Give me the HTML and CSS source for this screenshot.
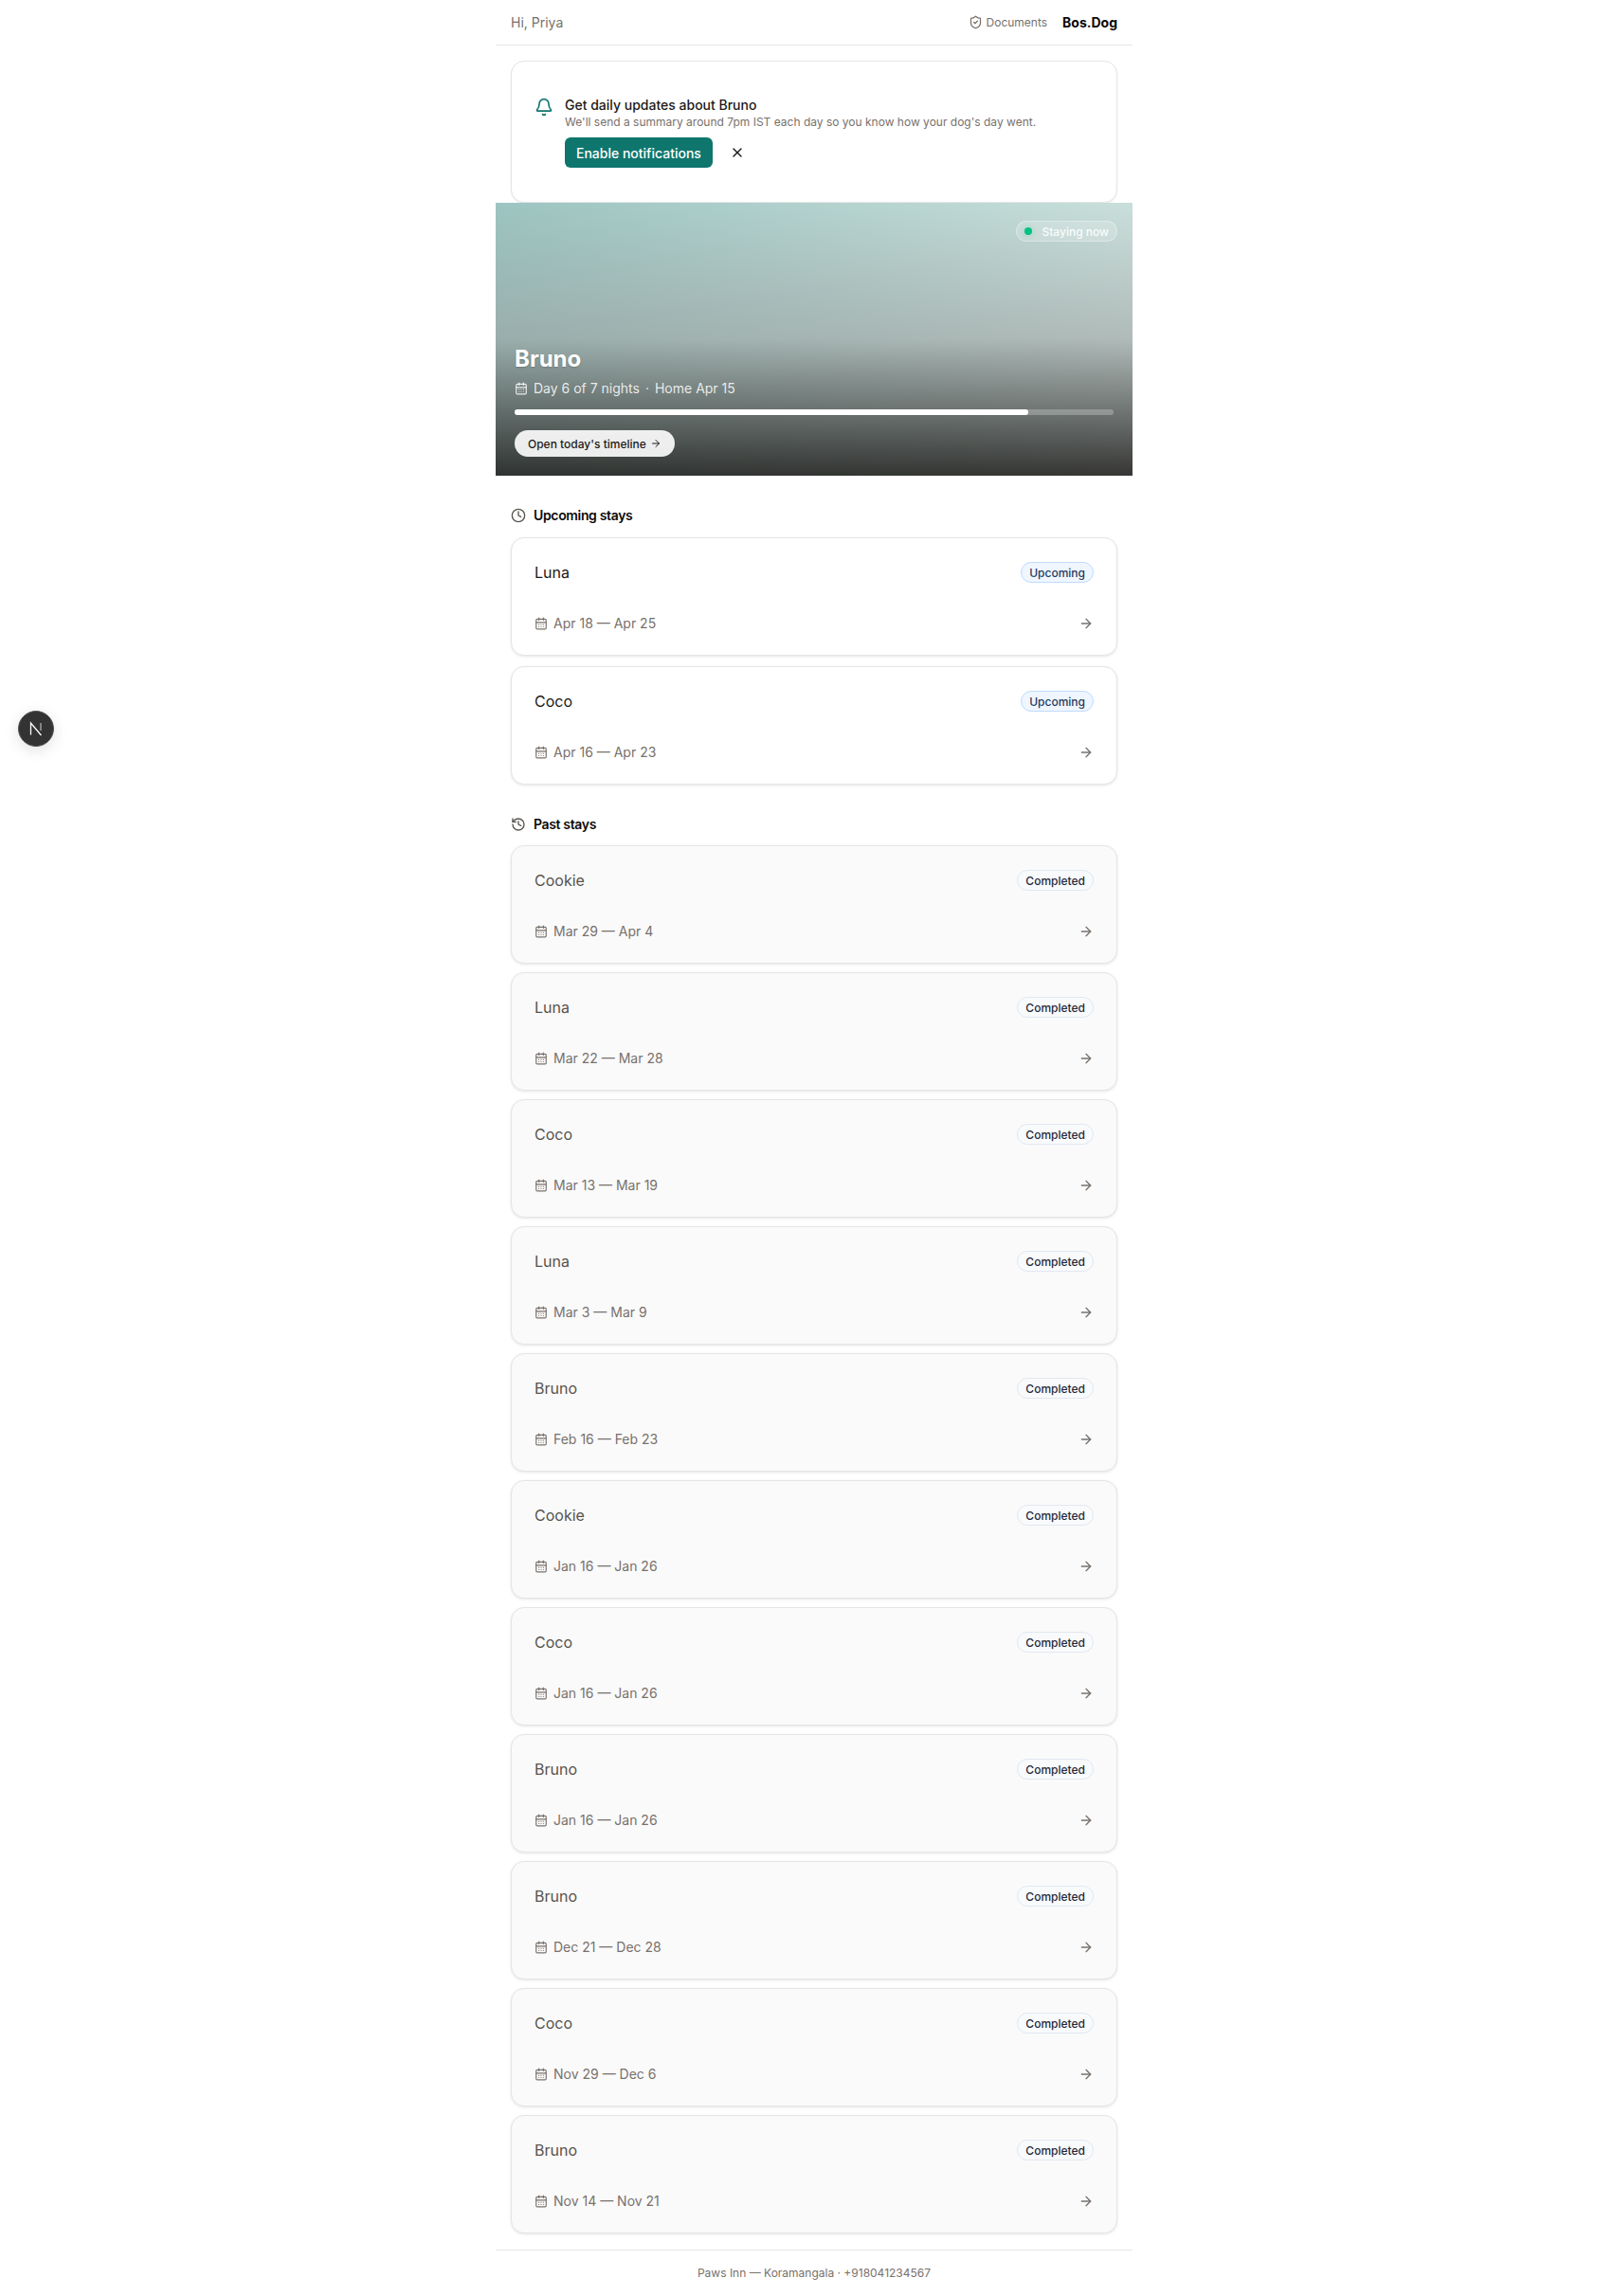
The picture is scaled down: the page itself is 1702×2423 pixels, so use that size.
FILE: index.html
```html
<!DOCTYPE html>
<html lang="en">
<head>
<meta charset="UTF-8">
<meta name="viewport" content="width=device-width, initial-scale=1.0">
<title>Bos.Dog</title>
<link rel="stylesheet" href="styles.css">
</head>
<body>

<svg class="sprite" width="0" height="0">
  <symbol id="i-bell" viewBox="0 0 24 24"><path d="M10.268 21a2 2 0 0 0 3.464 0"/><path d="M3.262 15.326A1 1 0 0 0 4 17h16a1 1 0 0 0 .74-1.673C19.41 13.956 18 12.499 18 8A6 6 0 0 0 6 8c0 4.499-1.411 5.956-2.738 7.326"/></symbol>
  <symbol id="i-shield" viewBox="0 0 24 24"><path d="M20 13c0 5-3.5 7.5-7.66 8.95a1 1 0 0 1-.67-.01C7.5 20.5 4 18 4 13V6a1 1 0 0 1 1-1c2 0 4.5-1.2 6.24-2.72a1.17 1.17 0 0 1 1.52 0C14.51 3.81 17 5 19 5a1 1 0 0 1 1 1z"/><path d="m9 12 2 2 4-4"/></symbol>
  <symbol id="i-x" viewBox="0 0 24 24"><path d="M18 6 6 18"/><path d="m6 6 12 12"/></symbol>
  <symbol id="i-cal" viewBox="0 0 24 24"><path d="M8 2v4"/><path d="M16 2v4"/><rect x="3" y="4" width="18" height="18" rx="2"/><path d="M3 10h18"/><path d="M8 14h.01"/><path d="M12 14h.01"/><path d="M16 14h.01"/><path d="M8 18h.01"/><path d="M12 18h.01"/><path d="M16 18h.01"/></symbol>
  <symbol id="i-arrow" viewBox="0 0 24 24"><path d="M5 12h14"/><path d="m12 5 7 7-7 7"/></symbol>
  <symbol id="i-clock" viewBox="0 0 24 24"><circle cx="12" cy="12" r="10"/><polyline points="12 6 12 12 16 14"/></symbol>
  <symbol id="i-history" viewBox="0 0 24 24"><path d="M3 12a9 9 0 1 0 9-9 9.75 9.75 0 0 0-6.74 2.74L3 8"/><path d="M3 3v5h5"/><path d="M12 7v5l4 2"/></symbol>
</svg>

<!-- dev tools indicator -->
<div class="dev-badge">
  <svg viewBox="0 0 24 24" width="24" height="24"><path d="M6.5 18.5V6l11 13" fill="none" stroke="#fff" stroke-width="1.3"/><path d="M17 6v8" fill="none" stroke="#bbb" stroke-width="1.2"/></svg>
</div>

<div class="page">

  <header class="topbar">
    <span class="greeting">Hi, Priya</span>
    <div class="topbar-right">
      <a class="docs"><svg class="icon icon-15"><use href="#i-shield"/></svg>Documents</a>
      <span class="brand">Bos.Dog</span>
    </div>
  </header>

  <div class="notice-wrap">
    <div class="notice">
      <svg class="icon notice-bell"><use href="#i-bell"/></svg>
      <div class="notice-body">
        <div class="notice-title">Get daily updates about Bruno</div>
        <div class="notice-text">We'll send a summary around 7pm IST each day so you know how your dog's day went.</div>
        <div class="notice-actions">
          <button class="btn-enable">Enable notifications</button>
          <svg class="icon notice-x"><use href="#i-x"/></svg>
        </div>
      </div>
    </div>
  </div>

  <section class="hero">
    <span class="hero-status"><i class="dot"></i>Staying now</span>
    <h1 class="hero-name">Bruno</h1>
    <div class="hero-meta"><svg class="icon icon-14"><use href="#i-cal"/></svg><span>Day 6 of 7 nights<span class="sep">·</span>Home Apr 15</span></div>
    <div class="progress"><div class="progress-fill" style="width: 85.7%"></div></div>
    <a class="hero-btn">Open today's timeline<svg class="icon icon-12"><use href="#i-arrow"/></svg></a>
  </section>

  <section class="stays stays-upcoming">
    <h2 class="stays-head"><svg class="icon icon-16"><use href="#i-clock"/></svg>Upcoming stays</h2>
    <div class="stay-card">
      <div class="stay-top"><span class="stay-name">Luna</span><span class="tag tag-blue">Upcoming</span></div>
      <div class="stay-bottom"><span class="stay-date"><svg class="icon icon-14"><use href="#i-cal"/></svg>Apr 18 — Apr 25</span><svg class="icon icon-16"><use href="#i-arrow"/></svg></div>
    </div>
    <div class="stay-card">
      <div class="stay-top"><span class="stay-name">Coco</span><span class="tag tag-blue">Upcoming</span></div>
      <div class="stay-bottom"><span class="stay-date"><svg class="icon icon-14"><use href="#i-cal"/></svg>Apr 16 — Apr 23</span><svg class="icon icon-16"><use href="#i-arrow"/></svg></div>
    </div>
  </section>

  <section class="stays stays-past">
    <h2 class="stays-head"><svg class="icon icon-16"><use href="#i-history"/></svg>Past stays</h2>
    <div class="stay-card">
      <div class="stay-top"><span class="stay-name">Cookie</span><span class="tag">Completed</span></div>
      <div class="stay-bottom"><span class="stay-date"><svg class="icon icon-14"><use href="#i-cal"/></svg>Mar 29 — Apr 4</span><svg class="icon icon-16"><use href="#i-arrow"/></svg></div>
    </div>
    <div class="stay-card">
      <div class="stay-top"><span class="stay-name">Luna</span><span class="tag">Completed</span></div>
      <div class="stay-bottom"><span class="stay-date"><svg class="icon icon-14"><use href="#i-cal"/></svg>Mar 22 — Mar 28</span><svg class="icon icon-16"><use href="#i-arrow"/></svg></div>
    </div>
    <div class="stay-card">
      <div class="stay-top"><span class="stay-name">Coco</span><span class="tag">Completed</span></div>
      <div class="stay-bottom"><span class="stay-date"><svg class="icon icon-14"><use href="#i-cal"/></svg>Mar 13 — Mar 19</span><svg class="icon icon-16"><use href="#i-arrow"/></svg></div>
    </div>
    <div class="stay-card">
      <div class="stay-top"><span class="stay-name">Luna</span><span class="tag">Completed</span></div>
      <div class="stay-bottom"><span class="stay-date"><svg class="icon icon-14"><use href="#i-cal"/></svg>Mar 3 — Mar 9</span><svg class="icon icon-16"><use href="#i-arrow"/></svg></div>
    </div>
    <div class="stay-card">
      <div class="stay-top"><span class="stay-name">Bruno</span><span class="tag">Completed</span></div>
      <div class="stay-bottom"><span class="stay-date"><svg class="icon icon-14"><use href="#i-cal"/></svg>Feb 16 — Feb 23</span><svg class="icon icon-16"><use href="#i-arrow"/></svg></div>
    </div>
    <div class="stay-card">
      <div class="stay-top"><span class="stay-name">Cookie</span><span class="tag">Completed</span></div>
      <div class="stay-bottom"><span class="stay-date"><svg class="icon icon-14"><use href="#i-cal"/></svg>Jan 16 — Jan 26</span><svg class="icon icon-16"><use href="#i-arrow"/></svg></div>
    </div>
    <div class="stay-card">
      <div class="stay-top"><span class="stay-name">Coco</span><span class="tag">Completed</span></div>
      <div class="stay-bottom"><span class="stay-date"><svg class="icon icon-14"><use href="#i-cal"/></svg>Jan 16 — Jan 26</span><svg class="icon icon-16"><use href="#i-arrow"/></svg></div>
    </div>
    <div class="stay-card">
      <div class="stay-top"><span class="stay-name">Bruno</span><span class="tag">Completed</span></div>
      <div class="stay-bottom"><span class="stay-date"><svg class="icon icon-14"><use href="#i-cal"/></svg>Jan 16 — Jan 26</span><svg class="icon icon-16"><use href="#i-arrow"/></svg></div>
    </div>
    <div class="stay-card">
      <div class="stay-top"><span class="stay-name">Bruno</span><span class="tag">Completed</span></div>
      <div class="stay-bottom"><span class="stay-date"><svg class="icon icon-14"><use href="#i-cal"/></svg>Dec 21 — Dec 28</span><svg class="icon icon-16"><use href="#i-arrow"/></svg></div>
    </div>
    <div class="stay-card">
      <div class="stay-top"><span class="stay-name">Coco</span><span class="tag">Completed</span></div>
      <div class="stay-bottom"><span class="stay-date"><svg class="icon icon-14"><use href="#i-cal"/></svg>Nov 29 — Dec 6</span><svg class="icon icon-16"><use href="#i-arrow"/></svg></div>
    </div>
    <div class="stay-card">
      <div class="stay-top"><span class="stay-name">Bruno</span><span class="tag">Completed</span></div>
      <div class="stay-bottom"><span class="stay-date"><svg class="icon icon-14"><use href="#i-cal"/></svg>Nov 14 — Nov 21</span><svg class="icon icon-16"><use href="#i-arrow"/></svg></div>
    </div>
  </section>

  <footer class="foot">Paws Inn — Koramangala · +918041234567</footer>

</div>

</body>
</html>
```

FILE: styles.css
```css
* {
  box-sizing: border-box;
}

body {
  margin: 0;
  padding-left: 16px; /* column sits a bit right of centre */
  background: #fff;
  color: #1c1917;
  font-family: Inter, "Liberation Sans", sans-serif;
}

.sprite {
  position: absolute;
}

.icon {
  display: block;
  flex: none;
  fill: none;
  stroke: currentColor;
  stroke-width: 2;
  stroke-linecap: round;
  stroke-linejoin: round;
}

.icon-12 { width: 12px; height: 12px; }
.icon-14 { width: 14px; height: 14px; }
.icon-15 { width: 15px; height: 15px; }
.icon-16 { width: 16px; height: 16px; }

.page {
  width: 672px;
  margin: 0 auto;
}

/* top bar */
.topbar {
  height: 48px;
  padding: 0 16px;
  display: flex;
  align-items: center;
  justify-content: space-between;
  border-bottom: 1px solid #e7e5e4;
}

.greeting {
  font-size: 14px;
  color: #78716c;
}

.topbar-right {
  display: flex;
  align-items: center;
  gap: 16px;
}

.docs {
  display: flex;
  align-items: center;
  gap: 4px;
  font-size: 12px;
  color: #78716c;
}

.brand {
  font-size: 14px;
  font-weight: 700;
  color: #0c0a09;
}

/* notification prompt */
.notice-wrap {
  padding: 16px 16px 0;
}

.notice {
  height: 150px;
  padding: 36px 24px;
  display: flex;
  gap: 12px;
  background: #fff;
  border: 1px solid #e7e5e4;
  border-radius: 14px;
  box-shadow: 0 1px 2px rgba(0, 0, 0, 0.08);
}

.notice-bell {
  width: 20px;
  height: 20px;
  margin-top: 2px;
  color: #0f766e;
}

.notice-title {
  font-size: 14px;
  font-weight: 500;
  line-height: 20px;
}

.notice-text {
  font-size: 12px;
  line-height: 16px;
  color: #78716c;
}

.notice-actions {
  margin-top: 8px;
  display: flex;
  align-items: center;
  gap: 16px;
}

.btn-enable {
  height: 32px;
  padding: 0 12px;
  border: 0;
  border-radius: 6px;
  background: #0f766e;
  color: #fff;
  font: 500 14px Inter, sans-serif;
}

.notice-x {
  width: 16px;
  height: 16px;
  margin-left: 2px;
  color: #1c1917;
}

/* current stay */
.hero {
  position: relative;
  height: 288px;
  padding: 20px;
  display: flex;
  flex-direction: column;
  justify-content: flex-end;
  color: #fff;
  background:
    linear-gradient(to top, rgba(28, 25, 23, 0.85), rgba(150, 150, 150, 0.5) 50%, rgba(150, 150, 150, 0)),
    linear-gradient(100deg, #9cc5c1, #cce1dd);
}

.hero-status {
  position: absolute;
  top: 19px;
  right: 16px;
  height: 22px;
  padding: 0 8px;
  display: flex;
  align-items: center;
  gap: 10px;
  font-size: 12px;
  font-weight: 500;
  color: rgba(255, 255, 255, 0.92);
  background: rgba(255, 255, 255, 0.2);
  border: 1px solid rgba(255, 255, 255, 0.3);
  border-radius: 999px;
}

.dot {
  width: 8px;
  height: 8px;
  border-radius: 50%;
  background: #00c281;
  box-shadow: 0 0 6px rgba(0, 194, 129, 0.25);
}

.hero-name {
  margin: 0;
  font-size: 24px;
  font-weight: 700;
  line-height: 32px;
  text-shadow: 0 1px 2px rgba(0, 0, 0, 0.2);
}

.hero-meta {
  margin-top: 5px;
  display: flex;
  align-items: center;
  gap: 6px;
  font-size: 14px;
  line-height: 20px;
  color: rgba(255, 255, 255, 0.85);
}

.sep {
  margin: 0 6px;
}

.progress {
  margin-top: 12px;
  height: 6px;
  border-radius: 999px;
  background: rgba(255, 255, 255, 0.25);
}

.progress-fill {
  height: 100%;
  border-radius: 999px;
  background: #fff;
}

.hero-btn {
  margin-top: 16px;
  align-self: flex-start;
  height: 28px;
  padding: 0 14px;
  display: flex;
  align-items: center;
  gap: 4px;
  font-size: 12px;
  font-weight: 500;
  color: #1c1917;
  background: rgba(255, 255, 255, 0.9);
  border-radius: 999px;
}

/* stay lists */
.stays {
  display: flex;
  flex-direction: column;
  padding: 32px 16px 0;
}

.stays-upcoming { gap: 11px; }
.stays-past { gap: 9px; }

.stays-head {
  margin: 0 0 2px;
  display: flex;
  align-items: center;
  gap: 8px;
  font-size: 14px;
  font-weight: 600;
  line-height: 20px;
  letter-spacing: -0.35px;
  color: #0c0a09;
}

.stays-past .stays-head {
  margin-bottom: 3px;
}

.stays-head .icon {
  color: #57534e;
}

.stay-card {
  height: 125px;
  padding: 25px 24px 24px;
  display: flex;
  flex-direction: column;
  justify-content: space-between;
  background: #fff;
  border: 1px solid #e7e5e4;
  border-radius: 14px;
  box-shadow: 0 1px 3px rgba(0, 0, 0, 0.1);
}

.stays-past .stay-card {
  background: #fafafa;
}

.stay-top,
.stay-bottom {
  display: flex;
  align-items: center;
  justify-content: space-between;
}

.stay-bottom {
  color: #78716c;
}

.stay-name {
  font-size: 16px;
  font-weight: 400;
}

.stays-past .stay-name {
  color: #57534e;
}

.stay-date {
  display: flex;
  align-items: center;
  gap: 6px;
  font-size: 14px;
  line-height: 18px;
}

.tag {
  height: 22px;
  padding: 0 8px;
  display: flex;
  align-items: center;
  font-size: 12px;
  font-weight: 500;
  color: #1e293b;
  background: #f8fafc;
  border: 1px solid #e2e8f0;
  border-radius: 999px;
}

.tag-blue {
  color: #1e3a5f;
  background: #eff6ff;
  border-color: #bfdbfe;
}

/* footer */
.foot {
  margin-top: 17px;
  padding: 16px;
  border-top: 1px solid #e7e5e4;
  text-align: center;
  font-size: 12px;
  line-height: 16px;
  color: #78716c;
}

/* floating dev indicator */
.dev-badge {
  position: absolute;
  left: 19px;
  top: 750px;
  width: 38px;
  height: 38px;
  display: flex;
  align-items: center;
  justify-content: center;
  background: #333;
  border: 1px solid #555;
  border-radius: 50%;
  box-shadow: 0 4px 16px rgba(0, 0, 0, 0.12);
}
```
